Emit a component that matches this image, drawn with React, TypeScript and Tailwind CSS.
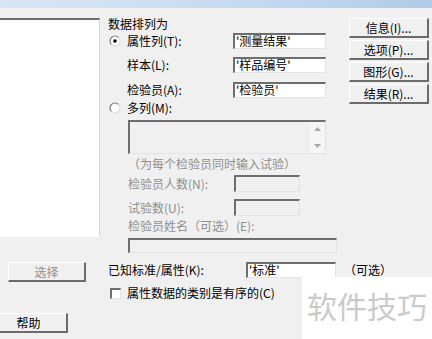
const sunken =
  "border-t-2 border-l-2 border-r border-b border-t-[#6e6e6e] border-l-[#6e6e6e] border-r-[#e3e3e3] border-b-[#e3e3e3]";
const raised =
  "bg-[#f0f0f0] border-t border-l border-r-2 border-b-2 border-t-white border-l-white border-r-[#6b6b6b] border-b-[#6b6b6b] flex items-center justify-center";

const Radio = ({ on }: { on?: boolean }) => (
  <svg width="12" height="12" viewBox="0 0 12 12" className="ml-[1px]">
    <circle cx="6" cy="6" r="5" fill="white" />
    <path d="M2.46 9.54 A5 5 0 0 1 9.54 2.46" stroke="#7a7a7a" strokeWidth="1.2" fill="none" />
    <path d="M9.54 2.46 A5 5 0 0 1 2.46 9.54" stroke="#dcdcdc" strokeWidth="1.2" fill="none" />
    {on && <circle cx="6" cy="6" r="1.8" fill="#000" />}
  </svg>
);

const Box = ({ text, className }: { text?: string; className: string }) => (
  <div className={`${sunken} bg-white shrink-0 ${className} flex items-center pl-[1px] leading-[14px] whitespace-nowrap`}>
    {text}
  </div>
);

const OffBox = ({ className }: { className: string }) => (
  <div className={`${sunken} bg-[#f0f0f0] shrink-0 ${className}`} />
);

const sideButtons = ["信息(I)...", "选项(P)...", "图形(G)...", "结果(R)..."];

export default function App() {
  return (
    <div className="relative w-[432px] h-[339px] overflow-hidden bg-[#f0f0f0] text-[12px] text-black font-['Noto_Sans_CJK_SC',sans-serif]">
      <div className="h-[8px] bg-gradient-to-r from-[#d7e6f5] via-[#c9dcf0] to-[#b1cbe8]" />
      <div className="flex">
        {/* left column */}
        <div className="w-[100px] shrink-0 flex flex-col">
          <div className="mt-[10px] h-[219px] bg-white border-t-2 border-t-[#6e6e6e] border-r border-r-[#d6d6d6]" />
          <div className={`${raised} mt-[25px] ml-[8px] w-[78px] h-[20px] text-[#8f8f8f]`}>选择</div>
          <div className={`${raised} mt-[31px] -ml-[10px] w-[78px] h-[20px]`}>帮助</div>
        </div>

        {/* middle column */}
        <div className="w-[240px] shrink-0 pl-[8px] flex flex-col leading-[16px] whitespace-nowrap">
          <div className="mt-[8px] h-[16px] flex items-center">数据排列为</div>

          <div className="h-[17px] flex items-center">
            <div className="w-[19px] shrink-0"><Radio on /></div>
            <div className="w-[106px] shrink-0">属性列(T):</div>
            <Box text="'测量结果'" className="w-[93px] h-[16px]" />
          </div>
          <div className="mt-[7px] h-[17px] flex items-center">
            <div className="w-[19px] shrink-0" />
            <div className="w-[106px] shrink-0">样本(L):</div>
            <Box text="'样品编号'" className="w-[93px] h-[16px]" />
          </div>
          <div className="mt-[8px] h-[17px] flex items-center">
            <div className="w-[19px] shrink-0" />
            <div className="w-[106px] shrink-0">检验员(A):</div>
            <Box text="'检验员'" className="w-[93px] h-[16px]" />
          </div>
          <div className="mt-[2px] h-[16px] flex items-center">
            <div className="w-[19px] shrink-0"><Radio /></div>
            <div>多列(M):</div>
          </div>

          <div className={`${sunken} bg-[#f0f0f0] mt-[4px] ml-[20px] w-[198px] h-[34px] flex justify-end`}>
            <div className="w-[15px] bg-[#f6f6f6] flex flex-col items-center justify-between py-[5px]">
              <svg width="7" height="4" viewBox="0 0 7 4"><path d="M0 4 L3.5 0 L7 4 Z" fill="#a8a8a8" /></svg>
              <svg width="7" height="4" viewBox="0 0 7 4"><path d="M0 0 L3.5 4 L7 0 Z" fill="#a8a8a8" /></svg>
            </div>
          </div>

          <div className="mt-[1px] ml-[20px] h-[17px] flex items-center text-[#8f8f8f]">（为每个检验员同时输入试验）</div>

          <div className="mt-[2px] ml-[20px] h-[19px] flex items-center text-[#8f8f8f]">
            <div className="w-[106px] shrink-0">检验员人数(N):</div>
            <OffBox className="w-[66px] h-[17px]" />
          </div>
          <div className="mt-[6px] ml-[20px] h-[17px] flex items-center text-[#8f8f8f]">
            <div className="w-[106px] shrink-0">试验数(U):</div>
            <OffBox className="w-[66px] h-[17px]" />
          </div>
          <div className="mt-[2px] ml-[20px] h-[16px] flex items-center text-[#8f8f8f]">检验员姓名（可选）(E):</div>
          <OffBox className="mt-[4px] ml-[20px] w-[209px] h-[15px]" />

          <div className="mt-[8px] h-[17px] flex items-center">
            <div className="w-[138px] shrink-0">已知标准/属性(K):</div>
            <Box text="'标准'" className="w-[90px] h-[16px]" />
            <div className="ml-[8px] shrink-0">（可选）</div>
          </div>

          <div className="mt-[7px] h-[16px] flex items-center">
            <div className="w-[19px] shrink-0">
              <div className={`${sunken} bg-white ml-[2px] w-[11px] h-[11px]`} />
            </div>
            <div className="shrink-0">属性数据的类别是有序的(C)</div>
          </div>
        </div>

        {/* right column */}
        <div className="ml-[9px] mt-[10px] w-[80px] shrink-0 flex flex-col gap-[2px]">
          {sideButtons.map((b) => (
            <div key={b} className={`${raised} h-[20px] whitespace-nowrap`}>{b}</div>
          ))}
        </div>
      </div>

      {/* watermark overlay */}
      <div className="absolute left-[302px] top-[277px] w-[130px] h-[62px] bg-white pl-[5px] pt-[12px] text-[30px] leading-[32px] text-[#cacaca] whitespace-nowrap">
        软件技巧
      </div>
    </div>
  );
}
